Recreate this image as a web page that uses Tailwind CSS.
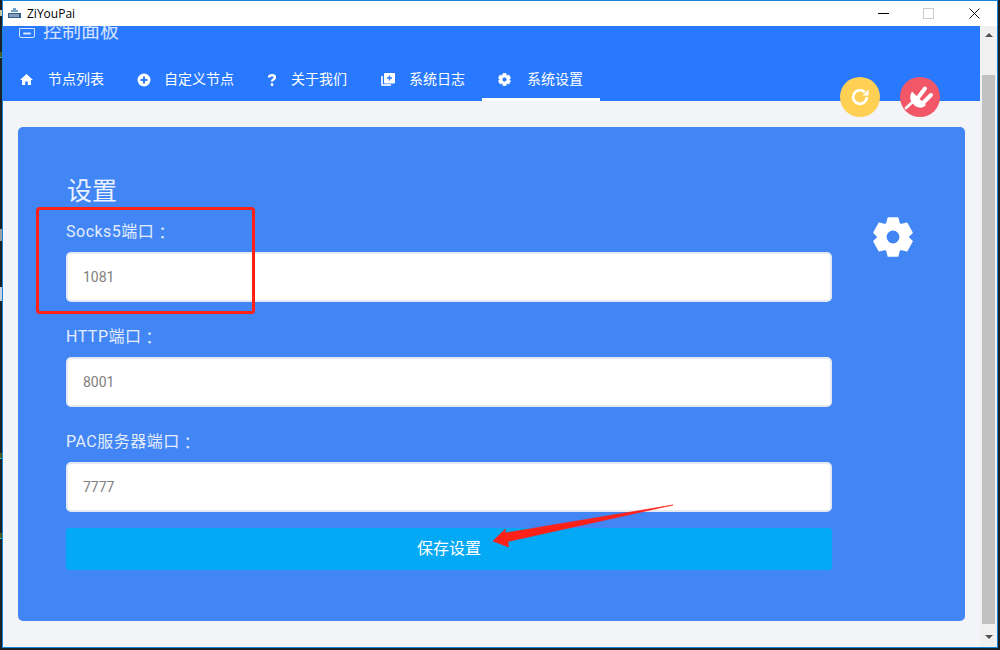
<!DOCTYPE html>
<html lang="zh-CN">
<head>
    <meta charset="UTF-8">
    <script src="https://cdn.jsdelivr.net/npm/@tailwindcss/browser@4"></script>
    <title>ZiYouPai</title>
</head>
<body class="w-[1000px] h-[650px] overflow-hidden bg-[#1c2126] font-['Roboto','Noto_Sans_CJK_SC',sans-serif]">
    <div class="relative w-[1000px] h-[650px]">
        <!-- Desktop peeking out left of the window -->
        <div class="absolute left-0 top-[10px] w-[2px] h-[6px] bg-[#c9c3a0]"></div>
        <div class="absolute left-0 top-[52px] w-[2px] h-[5px] bg-[#4a5a20]"></div>
        <div class="absolute left-0 top-[57px] w-[2px] h-px bg-[#2fb4d8]"></div>
        <div class="absolute left-0 top-[229px] w-[2px] h-[12px] bg-[#9aa0a0]"></div>
        <div class="absolute left-0 top-[287px] w-[2px] h-[14px] bg-[#c8d0e0]"></div>
        <div class="absolute left-0 top-[453px] w-[2px] h-[5px] bg-[#4a5a20]"></div>
        <div class="absolute left-0 top-[458px] w-[2px] h-px bg-[#2fb4d8]"></div>
        <div class="absolute left-0 top-[533px] w-[2px] h-[5px] bg-[#4a5a20]"></div>
        <div class="absolute left-0 top-[538px] w-[2px] h-px bg-[#2fb4d8]"></div>

        <!-- Window -->
        <div class="ml-[2px] w-[996px] h-[648px] border border-[#1883d7] flex flex-col">
            <!-- Title bar -->
            <div class="h-[25px] shrink-0 bg-white flex items-center relative">
                <svg class="ml-[5px] w-[13px] h-[11px]" viewBox="0 0 13 11">
                    <path d="M5 0h3v2h2v2H3V2h2z" fill="#6fa3c8"/>
                    <rect x="0" y="5" width="13" height="5" fill="#2f5d8a"/>
                    <path d="M2 6v3M4 6v3M6 6v3M8 6v3M10 6v3" stroke="#d5e0ea" stroke-width="1"/>
                </svg>
                <span class="ml-[6px] text-[12px] text-black font-['Open_Sans',sans-serif]">ZiYouPai</span>
                <div class="ml-auto flex items-center">
                    <div class="w-[11px] h-px bg-black mr-[34px]"></div>
                    <div class="w-[11px] h-[11px] border border-[#cccccc] mr-[35px]"></div>
                    <svg class="w-[11px] h-[11px] mr-[17px]" viewBox="0 0 11 11"><path d="M.5.5l10 10M10.500.5l-10 10" stroke="#111" stroke-width="1" fill="none"/></svg>
                </div>
            </div>

            <div class="flex-1 flex min-h-0">
                <!-- Page -->
                <div class="w-[977px] bg-[#f3f4f8] relative overflow-hidden">
                    <!-- Header -->
                    <div class="h-[75px] bg-[#2979ff] overflow-hidden flex flex-col">
                        <div class="h-[24px] mt-[-6px] ml-[16px] flex items-center text-[19px] text-white/80">
                            <svg class="w-[16px] h-[11px] mr-[8px]" viewBox="0 0 16 11" fill="none" stroke="currentColor" stroke-width="1"><path d="M.5 1.500h15v7.500a1.500 1.500 0 0 1-1.500 1.500H2A1.500 1.500 0 0 1 .5 9z"/><rect x="4" y="5.500" width="8" height="2" rx="1" fill="currentColor" stroke="none"/></svg>
                            控制面板
                        </div>
                        <nav class="mt-auto ml-px flex h-[43px] text-[14px] text-white">
                            <a class="w-[117px] pl-[16px] flex items-center">
                                <span class="w-[28px] shrink-0">
                                    <svg class="w-[13px] h-[13px]" viewBox="0 0 13 13" fill="currentColor"><path d="M6.500 1L0 7h2v5h3.200V8.500h2.600V12H11V7h2z"/></svg>
                                </span>
                                节点列表
                            </a>
                            <a class="w-[130px] pl-[16px] flex items-center">
                                <span class="w-[27px] shrink-0">
                                    <svg class="w-[14px] h-[14px]" viewBox="0 0 14 14"><circle cx="7" cy="7" r="6.500" fill="currentColor"/><path d="M3.500 7h7M7 3.500v7" stroke="#2979ff" stroke-width="2"/></svg>
                                </span>
                                自定义节点
                            </a>
                            <a class="w-[114px] pl-[16px] flex items-center">
                                <span class="w-[24px] shrink-0">
                                    <svg class="ml-px w-[8px] h-[12px]" viewBox="0 0 8 12" fill="none" stroke="currentColor" stroke-width="2.400"><path d="M1 3.600C1 2 2.300 1.200 4 1.200S7 2.200 7 3.400C7 5.200 4 5.200 4 7.600"/><path d="M4 9.200V12"/></svg>
                                </span>
                                关于我们
                            </a>
                            <a class="w-[117px] pl-[16px] flex items-center">
                                <span class="w-[28px] shrink-0">
                                    <svg class="w-[14px] h-[13px]" viewBox="0 0 14 13"><path d="M0 3h2v8h8v2H1.500A1.500 1.500 0 0 1 0 11.500z" fill="#dbe7ff"/><rect x="3" y="0" width="11" height="10.500" rx="1" fill="currentColor"/><path d="M6 5h5M8.500 2.500v5" stroke="#2979ff" stroke-width="1.300"/></svg>
                                </span>
                                系统日志
                            </a>
                            <a class="w-[118px] pl-[16px] flex items-center relative">
                                <span class="w-[29px] shrink-0">
                                    <svg class="w-[13px] h-[13px]" viewBox="-1 -1 42 42" fill="currentColor" stroke="currentColor" stroke-width="1.500" stroke-linejoin="round" fill-rule="evenodd"><path d="M15 0h10l1.500 6 2 1 6-1.500 5.500 10-4.500 4.500 4.500 4.500-5.500 10-6-1.500-2 1-1.500 6H15l-1.500-6-2-1-6 1.500L0 24.500 4.500 20 0 15.500l5.500-10 6 1.500 2-1zM20 12.500a7.500 7.500 0 1 0 0 15 7.500 7.500 0 0 0 0-15z"/></svg>
                                </span>
                                系统设置
                                <span class="absolute left-0 right-0 bottom-0 h-[3px] bg-white"></span>
                            </a>
                        </nav>
                    </div>

                    <!-- Card -->
                    <div class="mt-[26px] ml-[15px] w-[947px] h-[494px] bg-[#4285f4] rounded-[5px] pt-[51px] pl-[48px] flex items-start">
                        <div class="w-[766px]">
                            <h2 class="ml-px h-[24px] leading-[27px] text-[25px] text-white/90 mb-[20px]">设置</h2>
                            <label class="flex items-center h-[20px] leading-[20px] text-[16px] tracking-[.5px] text-white/85 mb-[10px]">Socks5端口<span class="font-['Noto_Sans_CJK_TC']">：</span></label>
                            <input class="block w-full h-[50px] mb-[25px] px-[15px] bg-white border-2 border-[#e4e9f2] rounded-[5px] text-[14px] text-[#808080]" value="1081">
                            <label class="flex items-center h-[20px] leading-[20px] text-[16px] tracking-[.5px] text-white/85 mb-[10px]">HTTP端口<span class="font-['Noto_Sans_CJK_TC']">：</span></label>
                            <input class="block w-full h-[50px] mb-[25px] px-[15px] bg-white border-2 border-[#e4e9f2] rounded-[5px] text-[14px] text-[#808080]" value="8001">
                            <label class="flex items-center h-[20px] leading-[20px] text-[16px] tracking-[.5px] text-white/85 mb-[10px]">PAC服务器端口<span class="font-['Noto_Sans_CJK_TC']">：</span></label>
                            <input class="block w-full h-[50px] mb-[16px] px-[15px] bg-white border-2 border-[#e4e9f2] rounded-[5px] text-[14px] text-[#808080]" value="7777">
                            <button class="block w-full h-[42px] bg-[#03a9f4] rounded-[3px] text-[16px] text-white">保存设置</button>
                        </div>
                        <svg class="ml-[41px] mt-[39px] w-[40px] h-[40px] text-white" viewBox="-1 -1 42 42" fill="currentColor" stroke="currentColor" stroke-width="1.500" stroke-linejoin="round" fill-rule="evenodd"><path d="M15 0h10l1.500 6 2 1 6-1.500 5.500 10-4.500 4.500 4.500 4.500-5.500 10-6-1.500-2 1-1.500 6H15l-1.500-6-2-1-6 1.500L0 24.500 4.500 20 0 15.500l5.500-10 6 1.500 2-1zM20 12.500a7.500 7.500 0 1 0 0 15 7.500 7.500 0 0 0 0-15z"/></svg>
                    </div>

                    <!-- Floating buttons -->
                    <div class="absolute left-[837px] top-[51px] w-[40px] h-[40px] rounded-full bg-[#ffd054]">
                        <svg class="w-[40px] h-[40px]" viewBox="0 0 40 40" fill="none"><path d="M26.800 20a6.800 6.800 0 1 1-2-4.800" stroke="white" stroke-width="2.600"/><path d="M28.500 12.500v6h-6z" fill="white"/></svg>
                    </div>
                    <div class="absolute left-[897px] top-[51px] w-[40px] h-[40px] rounded-full bg-[#f25767]">
                        <svg class="w-[40px] h-[40px]" viewBox="0 0 40 40" fill="white"><path d="M6 31l6-5.500" stroke="white" stroke-width="2.600" stroke-linecap="round"/><path d="M12 14.500L26 28Q22 33 15 29Q7 22 12 14.500z"/><path d="M17 22l8-10.500M22 27l9-9" stroke="white" stroke-width="4" stroke-linecap="round"/></svg>
                    </div>
                </div>

                <!-- Scrollbar -->
                <div class="w-[17px] bg-[#f0f0f0] flex flex-col items-center">
                    <svg class="mt-[7px] w-[8px] h-[4px]" viewBox="0 0 8 4"><path d="M4 0l4 4H0z" fill="#505050"/></svg>
                    <div class="mt-[38px] w-[13px] h-[549px] bg-[#c1c1c1]"></div>
                    <svg class="mt-[11px] w-[8px] h-[4px]" viewBox="0 0 8 4"><path d="M0 0h8L4 4z" fill="#505050"/></svg>
                </div>
            </div>
        </div>

        <!-- Red annotations on top of the screenshot -->
        <svg class="absolute left-0 top-0 pointer-events-none" width="1000" height="650" viewBox="0 0 1000 650">
            <rect x="37.500" y="208.500" width="216" height="104" rx="2" fill="none" stroke="#ff2018" stroke-width="3"/>
            <path d="M673 505L508 541.500L508.500 547L493 541L505.500 529L505 533z" fill="#ff2018" stroke="#ff2018" stroke-width=".6"/>
        </svg>
    </div>
</body>
</html>
